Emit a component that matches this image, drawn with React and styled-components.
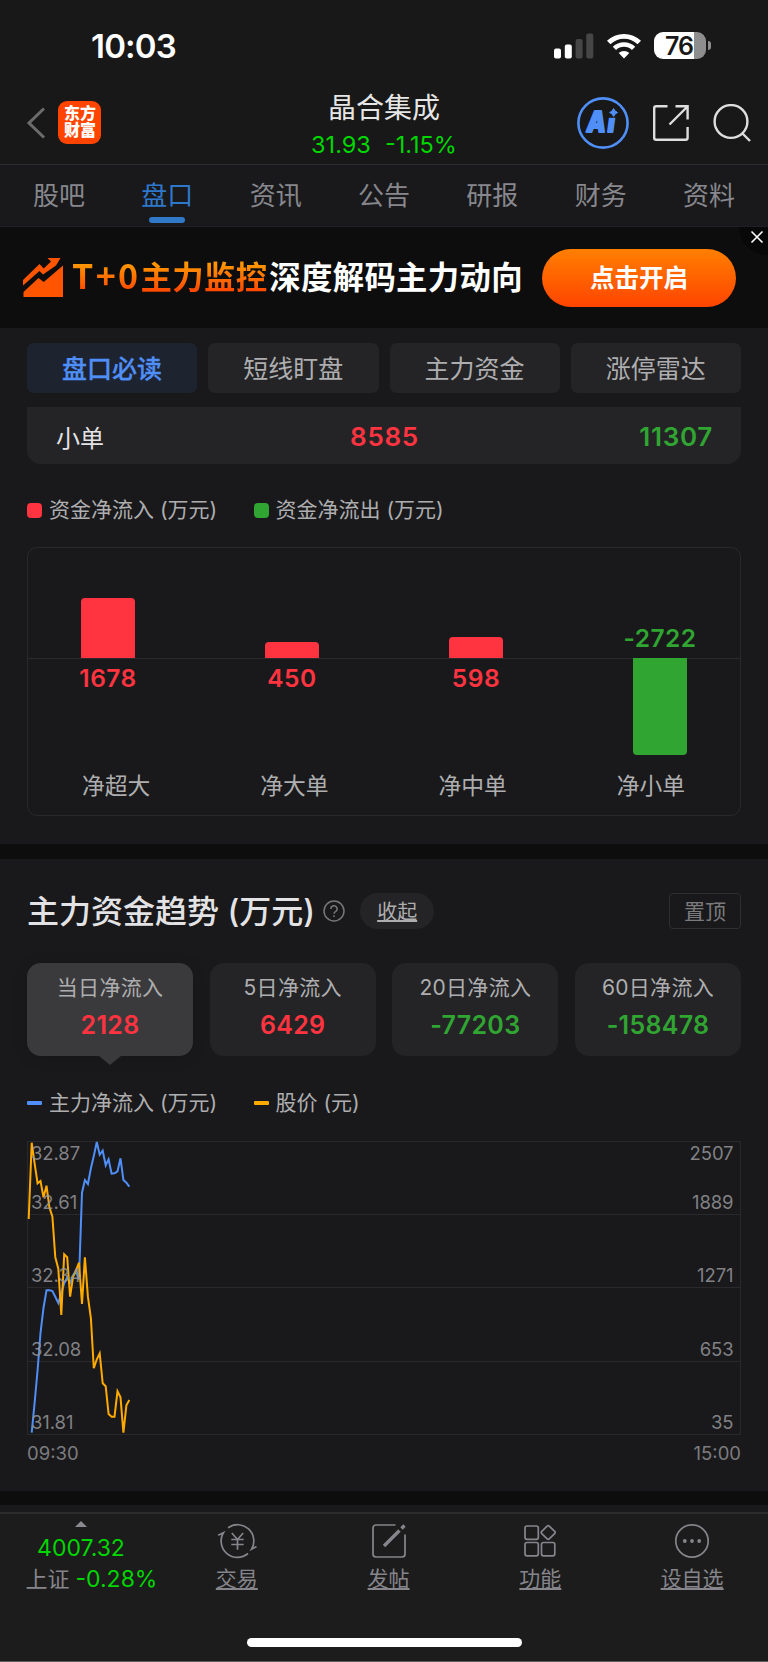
import React from 'react';
import styled, { createGlobalStyle } from 'styled-components';

const GlobalStyle = createGlobalStyle`
  * {
    box-sizing: border-box;
  }
  body {
    margin: 0;
    background: #19191b;
    color: #e3e3e5;
    font-family: Inter, 'Noto Sans CJK SC', sans-serif;
  }
`;

const RED = '#ff3440';
const GREEN = '#30a532';
const LIME = '#00d600';
const BLUE = '#4f8ff7';
const ORANGE = '#ffaa00';

const Page = styled.div`
  display: flex;
  flex-direction: column;
  width: 768px;
  height: 1662px;
  overflow: hidden;
  background: #19191b;
`;

const StatusBar = styled.div`
  display: flex;
  justify-content: space-between;
  align-items: center;
  height: 82px;
  padding: 9px 57px 0 91px;
  background: #181818;
`;

const Clock = styled.span`
  font-size: 33px;
  font-weight: 600;
  line-height: 40px;
  letter-spacing: -0.8px;
  color: #fff;
`;

const StatusIcons = styled.div`
  display: flex;
  align-items: center;
  gap: 13px;
`;

const BatteryBox = styled.div`
  display: flex;
  align-items: center;
  gap: 2px;
`;

const Battery = styled.div`
  display: flex;
  align-items: center;
  justify-content: center;
  width: 52px;
  height: 27px;
  padding-right: 2px;
  border-radius: 9px;
  background: linear-gradient(90deg, #fff 76%, #8e8e8e 76%);
  color: #181818;
  font-size: 25px;
  font-weight: 600;
  letter-spacing: -1px;
`;

const BatteryTip = styled.div`
  width: 3px;
  height: 9px;
  border-radius: 0 4px 4px 0;
  background: #8e8e8e;
`;

const Header = styled.div`
  display: grid;
  grid-template-columns: 1fr auto 1fr;
  align-items: center;
  height: 83px;
  padding: 0 17px 0 26px;
  border-bottom: 1px solid #2c2c2d;
  background: #181818;
`;

const HeaderLeft = styled.div`
  display: flex;
  align-items: center;
  gap: 12px;
  margin-top: -1px;
`;

const Logo = styled.div`
  width: 43px;
  height: 43px;
  padding: 4px 0 0 6px;
  border-radius: 9px;
  background: #ff4400;
  color: #fff;
  font-size: 16px;
  font-weight: 900;
  line-height: 17px;
`;

const HeaderTitle = styled.div`
  display: flex;
  flex-direction: column;
  align-items: center;
  /* keeps the name on the centre of the screen */
  margin-left: -9px;
  padding-top: 8px;
`;

const StockName = styled.div`
  font-size: 28px;
  line-height: 36px;
  color: #e6e6e6;
`;

const StockQuote = styled.div`
  display: flex;
  gap: 14px;
  font-size: 23.5px;
  line-height: 38px;
  color: ${LIME};
`;

const HeaderActions = styled.div`
  display: flex;
  justify-content: flex-end;
  align-items: center;
  gap: 23px;
  margin-top: -1px;
`;

const Tabs = styled.div`
  display: flex;
  justify-content: space-between;
  height: 62px;
  padding: 0 33px;
  border-bottom: 1px solid #202022;
`;

const Tab = styled.div`
  display: flex;
  flex-direction: column;
  align-items: center;
  width: 52px;
  padding-top: 12px;
  font-size: 26px;
  line-height: 38px;
  white-space: nowrap;
  color: ${(p) => (p.$active ? '#2e78cc' : '#87878d')};

  &::after {
    content: '';
    width: 36px;
    height: 6px;
    margin-top: 2px;
    border-radius: 3px;
    background: ${(p) => (p.$active ? '#3078c8' : 'transparent')};
  }
`;

const Banner = styled.div`
  position: relative;
  display: flex;
  align-items: center;
  height: 101px;
  padding: 0 32px 0 22px;
  background: #0d0d0d;
`;

const BannerText = styled.div`
  flex: 1;
  display: flex;
  margin-left: 8px;
  font-size: 31.4px;
  font-weight: 700;
  line-height: 44px;
  letter-spacing: 0.3px;
  white-space: nowrap;
  color: #fff;
`;

const BannerAccent = styled.span`
  margin-right: 2px;
  background: linear-gradient(180deg, #ff9500 20%, #ff4800 80%);
  -webkit-background-clip: text;
  background-clip: text;
  color: transparent;
`;

const BannerLatin = styled.span`
  font-family: 'Noto Sans CJK SC', sans-serif;
  font-size: 34px;
  line-height: 1;
  letter-spacing: 2.4px;
`;

const BannerButton = styled.button`
  width: 194px;
  height: 58px;
  padding: 0 0 3px;
  border: 0;
  border-radius: 29px;
  background: linear-gradient(180deg, #ff7f00, #ff4400);
  color: #fff;
  font-family: 'Noto Sans CJK SC', sans-serif;
  font-size: 24.5px;
  font-weight: 700;
`;

const BannerClose = styled.div`
  position: absolute;
  top: 0;
  right: 0;
  display: flex;
  justify-content: center;
  width: 29px;
  height: 28px;
  padding: 3px 0 0 6px;
  border-bottom-left-radius: 28px;
  background: #080808;
`;

const SubTabs = styled.div`
  display: flex;
  gap: 11px;
  padding: 15px 27px 14px;
`;

const SubTab = styled.div`
  flex: 1;
  height: 50px;
  border-radius: 7px;
  background: ${(p) => (p.$active ? '#1d232f' : '#242426')};
  color: ${(p) => (p.$active ? BLUE : '#aeaeb0')};
  font-size: 25px;
  font-weight: ${(p) => (p.$active ? 500 : 400)};
  -webkit-text-stroke: ${(p) => (p.$active ? '0.3px' : '0')};
  line-height: 52px;
  text-align: center;
`;

const OrderRow = styled.div`
  display: grid;
  grid-template-columns: 1fr 1fr 1fr;
  align-items: center;
  height: 57px;
  margin: 0 27px;
  padding: 2px 28px 0 29px;
  border-radius: 0 0 14px 14px;
  background: #242426;
  font-size: 24px;
`;

const OrderValue = styled.span`
  font-size: 26px;
  font-weight: 600;
  letter-spacing: 0.7px;
  text-align: ${(p) => p.$align};
  color: ${(p) => p.$color};
`;

const Legend = styled.div`
  display: flex;
  align-items: center;
  height: 30px;
  margin: ${(p) => p.$margin};
`;

const LegendItem = styled.div`
  display: flex;
  align-items: center;
  gap: 7px;
  width: 226.5px;
  font-size: 21px;
  line-height: 26px;
  white-space: pre;
  color: #aeaeb0;

  &::before {
    content: '';
    width: 15px;
    height: ${(p) => (p.$line ? 4 : 15)}px;
    border-radius: ${(p) => (p.$line ? 1 : 4)}px;
    background: ${(p) => p.$color};
  }
`;

const FlowBox = styled.div`
  height: 269px;
  margin: 0 27px;
  border: 1px solid #29292b;
  border-radius: 10px;
`;

const FlowRow = styled.div`
  display: flex;
  justify-content: space-between;
  align-items: ${(p) => (p.$upper ? 'flex-end' : 'flex-start')};
  height: ${(p) => (p.$upper ? 111 : 106)}px;
  padding: 0 53px;
  border-bottom: ${(p) => (p.$upper ? '1px solid #2a2a2c' : '0')};
`;

const FlowCell = styled.div`
  display: flex;
  justify-content: center;
  width: 54px;
`;

const Bar = styled.div`
  width: 54px;
  margin-top: ${(p) => (p.$down ? -1 : 0)}px;
  border-radius: ${(p) => (p.$down ? '0 0 4px 4px' : '4px 4px 0 0')};
  background: ${(p) => (p.$down ? GREEN : RED)};
`;

const BarValue = styled.span`
  padding: ${(p) => (p.$down ? '0 0 3px' : '2px 0 0')};
  font-size: 24.5px;
  font-weight: 600;
  line-height: 34px;
  letter-spacing: 0.5px;
  color: ${(p) => (p.$down ? GREEN : RED)};
`;

const FlowNames = styled.div`
  display: grid;
  grid-template-columns: repeat(4, 1fr);
  margin-left: -1px;
  font-size: 22.8px;
  line-height: 42px;
  text-align: center;
  color: #aeaeb0;
`;

const Gap = styled.div`
  height: ${(p) => p.$height}px;
  margin-top: ${(p) => p.$top || 0}px;
  background: #0d0d0d;
`;

const SectionHead = styled.div`
  display: flex;
  align-items: center;
  height: 36px;
  margin: 34px 27px;
`;

const SectionTitle = styled.h2`
  margin: 0 8px 0 0;
  padding-top: 1px;
  font-size: 32px;
  font-weight: 500;
  line-height: 38px;
  white-space: pre;
  color: #e3e3e5;
`;

const Pill = styled.div`
  width: 74px;
  height: 36px;
  margin-left: 15px;
  border-radius: 18px;
  background: #242426;
  color: #aeaeb0;
  font-size: 20px;
  line-height: 38px;
  text-align: center;
  text-decoration: underline;
`;

const PinButton = styled.div`
  width: 72px;
  height: 36px;
  margin-left: auto;
  border: 1px solid #2f2f31;
  border-radius: 4px;
  color: #7b7b7e;
  font-size: 21px;
  line-height: 35px;
  text-align: center;
`;

const Cards = styled.div`
  display: flex;
  gap: 16.6px;
  margin: 0 27px;
`;

const Card = styled.div`
  position: relative;
  flex: 1;
  height: 93px;
  padding-top: 8px;
  border-radius: 14px;
  background: ${(p) => (p.$active ? '#3a3a3c' : '#242426')};
  box-shadow: ${(p) => (p.$active ? '0 2px 16px rgba(0, 0, 0, 0.12)' : 'none')};
  text-align: center;

  &::after {
    content: '';
    display: ${(p) => (p.$active ? 'block' : 'none')};
    position: absolute;
    top: 100%;
    left: 50%;
    margin-left: -11px;
    border: 11px solid transparent;
    border-top: 9px solid #3a3a3c;
    border-bottom: 0;
  }
`;

const CardLabel = styled.div`
  font-size: 21px;
  line-height: 34px;
  letter-spacing: 0.3px;
  color: #aeaeb0;
`;

const CardValue = styled.div`
  margin-top: 3px;
  font-size: 25px;
  font-weight: 600;
  line-height: 34px;
  letter-spacing: 0.3px;
  color: ${(p) => (p.$value < 0 ? GREEN : RED)};
`;

const TrendBox = styled.div`
  position: relative;
  height: 294px;
  margin: 0 27px;
`;

const Scale = styled.div`
  position: absolute;
  top: -1px;
  bottom: 0;
  ${(p) => p.$side}: ${(p) => (p.$side === 'left' ? 4 : 7.5)}px;
  display: flex;
  flex-direction: column;
  font-size: 18.5px;
  line-height: 24px;
  letter-spacing: -0.1px;
  text-align: ${(p) => p.$side};
  color: rgba(150, 150, 154, 0.85);
`;

const Tick = styled.span`
  display: flex;
  flex-direction: column;
  justify-content: flex-end;
  height: ${(p) => (p.$first ? 25 : 73.5)}px;

  &:nth-child(2) {
    height: 48.5px;
  }
`;

const TimeAxis = styled.div`
  display: flex;
  justify-content: space-between;
  margin: 6px 27px 25px;
  font-size: 18.5px;
  line-height: 25px;
  color: #7c7c80;
`;

const Footer = styled.div`
  flex: 1;
  display: flex;
  flex-direction: column;
  margin-top: 7px;
  border-top: 2px solid #2c2c2e;
  border-bottom: 1px solid #5c5c5c;
  background: #1c1c1c;
`;

const FooterRow = styled.div`
  display: flex;
  height: 124px;
  color: #85858b;
`;

const IndexBox = styled.div`
  display: flex;
  flex-direction: column;
  align-items: center;
  width: 161px;
  padding-top: 7px;
  padding-left: 1px;
  font-size: 23px;
  line-height: 31px;
  color: ${LIME};

  &::before {
    content: '';
    margin-bottom: 6px;
    border: 6px solid transparent;
    border-top: 0;
    border-bottom-color: #8a8a90;
  }
`;

const IndexLine = styled.div`
  display: flex;
  gap: 6px;
  margin-left: 21px;
  white-space: nowrap;
`;

const IndexName = styled.span`
  font-size: 22px;
  color: #85858b;
`;

const NavItem = styled.div`
  display: flex;
  flex-direction: column;
  align-items: center;
  width: 151.8px;
  padding-top: 9px;
  font-size: 21px;
  line-height: 32px;
  text-decoration: underline;
  text-underline-offset: 2px;

  svg {
    margin-bottom: 4px;
  }
`;

const HomeIndicator = styled.div`
  width: 275px;
  height: 9px;
  margin: 0 auto;
  border-radius: 5px;
  background: #fff;
`;

const FLOWS = [
  { name: '净超大', value: 1678 },
  { name: '净大单', value: 450 },
  { name: '净中单', value: 598 },
  { name: '净小单', value: -2722 },
];

const CARDS = [
  { label: '当日净流入', value: 2128 },
  { label: '5日净流入', value: 6429 },
  { label: '20日净流入', value: -77203 },
  { label: '60日净流入', value: -158478 },
];

// one point per minute, as height from the top of the plot
const PRICE = [
  78, 1.7, 22.3, 42.3, 40, 56.3, 44.7, 66.3, 75.7, 116.3, 127.7, 174, 113.3,
  116.3, 155.7, 135.7, 129, 121.7, 163, 116.3, 155.7, 177.3, 227.3, 218.3,
  212.3, 242.3, 245.3, 273, 275.7, 275.7, 250.3, 256.3, 291.7, 264.3, 259,
];
const INFLOW = [
  291.7, 262, 229, 192, 167, 149.3, 149.3, 150, 155.7, 162, 152.3, 142.3,
  136.3, 141.7, 135, 131, 138.3, 51.7, 39, 43, 27.3, 15, 1, 13.7, 9.7, 24.3,
  18.3, 32.7, 32.3, 30.3, 17.3, 39, 41.7, 45.7,
];

const toPoints = (list, start) =>
  list.map((y, i) => `${(1.7 + (i + start) * 2.96).toFixed(1)},${y}`).join(' ');

const barHeight = (value) => (Math.abs(value) * 97) / 2722;

const Signal = () => (
  <svg width="40" height="26" viewBox="0 0 40 26">
    <rect x="0" y="15.5" width="7" height="10" rx="2" fill="#fff" />
    <rect x="10.8" y="11.5" width="7" height="14" rx="2" fill="#fff" />
    <rect x="21.6" y="6" width="7" height="19.5" rx="2" fill="#464646" />
    <rect x="32.3" y="0.5" width="7" height="25" rx="2" fill="#464646" />
  </svg>
);

const Wifi = () => (
  <svg width="34" height="26" viewBox="0 0 34 26" fill="none" stroke="#fff">
    <path d="M1.7 9.6a21.8 21.8 0 0 1 30.6 0" strokeWidth="4.9" />
    <path d="M7.4 15.4a13.8 13.8 0 0 1 19.2 0" strokeWidth="4.7" />
    <path d="M11.7 20.1a7.6 7.6 0 0 1 10.6 0L17 25.4z" fill="#fff" stroke="none" />
  </svg>
);

const BackIcon = () => (
  <svg width="20" height="32" viewBox="0 0 20 32" fill="none">
    <path d="M18 1.5L3 16l15 14.5" stroke="#6c6c6c" strokeWidth="3" />
  </svg>
);

const AiIcon = () => (
  <svg width="52" height="52" viewBox="0 0 52 52">
    <circle cx="26" cy="26" r="24.6" fill="none" stroke={BLUE} strokeWidth="2.6" />
    <text
      transform="translate(9.8 35.3) scale(0.86 1)"
      fill={BLUE}
      stroke={BLUE}
      strokeWidth="1.8"
      strokeLinejoin="round"
      fontFamily="Inter"
      fontSize="28"
      fontWeight="900"
      fontStyle="italic"
      letterSpacing="2"
    >
      Ai
    </text>
    <rect x="30.5" y="9" width="12" height="11.8" fill="#181818" />
    <path
      d="M36.6 11.5q1 3 4 4q-3 1-4 4q-1-3-4-4q3-1 4-4z"
      fill={BLUE}
      stroke={BLUE}
      strokeLinejoin="round"
    />
  </svg>
);

const ShareIcon = () => (
  <svg width="38" height="38" viewBox="0 0 38 38" fill="none" stroke="#dedede" strokeWidth="2.4">
    <path d="M15.5 2.3H4.2a2 2 0 0 0-2 2v29.4a2 2 0 0 0 2 2h29.4a2 2 0 0 0 2-2V23" />
    <path d="M17.5 20.5L35 3M23.5 2.3h12.1v13.2" />
  </svg>
);

const SearchIcon = () => (
  <svg width="38" height="38" viewBox="0 0 38 38" fill="none" stroke="#dedede" strokeWidth="2.4">
    <circle cx="18" cy="17.5" r="16.4" />
    <path d="M29.5 29.5l7.5 7.5" />
  </svg>
);

const TrendIcon = () => (
  <svg width="42" height="40" viewBox="0 0 42 40" fill="#ff5500">
    <path d="M1 22L17.5 6l4.2 4.5L29 3.5 25.5 0H38.5l-4.5 7.5L21 16.5 17.5 13 1 27.5z" />
    <path d="M1.5 34L16.5 20l5.2 4L41 7.500V39H1.5z" />
  </svg>
);

const CloseIcon = () => (
  <svg width="14" height="14" viewBox="0 0 14 14" stroke="#fff" strokeWidth="1.6">
    <path d="M1.5 1.5l11 11M12.5 1.5l-11 11" />
  </svg>
);

const HelpIcon = () => (
  <svg width="22" height="22" viewBox="0 0 22 22" fill="none" stroke="#77777a" strokeWidth="1.5">
    <circle cx="11" cy="11" r="10" />
    <path d="M7.9 8.9a3.1 3.1 0 1 1 4.6 2.7q-1.5.8-1.5 2.2M11 15.3v1.6" />
  </svg>
);

const TradeIcon = () => (
  <svg width="40" height="36" viewBox="0 0 40 36" fill="none" stroke="currentColor" strokeWidth="1.7">
    <path d="M11.1 4.7A16.3 16.3 0 0 1 34.6 26.2l4.9-2.6" />
    <path d="M31 30.5A16.3 16.3 0 0 1 6.4 9.8l-5.2 2.5" />
    <path d="M14.8 10l5.7 6.5 5.7-6.5M20.5 16.5v10.3M14.3 16.5h12.4M14.3 21.5h12.4" />
  </svg>
);

const PostIcon = () => (
  <svg width="36" height="36" viewBox="0 0 36 36" fill="none" stroke="currentColor" strokeWidth="1.7">
    <path d="M24.5 2H5a3 3 0 0 0-3 3v26a3 3 0 0 0 3 3h26a3 3 0 0 0 3-3V11.5" />
    <path d="M13 23l15.5-15.5M30.5 5.5l3-3" strokeWidth="3.4" />
  </svg>
);

const GridIcon = () => (
  <svg width="32" height="36" viewBox="0 0 32 36" fill="none" stroke="currentColor" strokeWidth="1.7">
    <rect x="1" y="3" width="13.3" height="13.3" rx="2" />
    <rect x="1" y="19.5" width="13.3" height="13.3" rx="2" />
    <rect x="17.5" y="19.5" width="13.3" height="13.3" rx="2" />
    <rect x="18.9" y="4.2" width="10.6" height="10.6" rx="1.5" transform="rotate(45 24.2 9.5)" />
  </svg>
);

const MoreIcon = () => (
  <svg width="36" height="36" viewBox="0 0 36 36" fill="none" stroke="currentColor" strokeWidth="1.7">
    <circle cx="18" cy="18" r="16.2" />
    <g fill="currentColor" stroke="none">
      <circle cx="10.8" cy="18" r="1.9" />
      <circle cx="18" cy="18" r="1.9" />
      <circle cx="25.2" cy="18" r="1.9" />
    </g>
  </svg>
);

const NAV = [
  { label: '交易', Icon: TradeIcon },
  { label: '发帖', Icon: PostIcon },
  { label: '功能', Icon: GridIcon },
  { label: '设自选', Icon: MoreIcon },
];

const FlowChart = () => (
  <FlowBox>
    <FlowRow $upper>
      {FLOWS.map(({ name, value }) => (
        <FlowCell key={name}>
          {value > 0 ? (
            <Bar style={{ height: barHeight(value) }} />
          ) : (
            <BarValue $down>{value}</BarValue>
          )}
        </FlowCell>
      ))}
    </FlowRow>
    <FlowRow>
      {FLOWS.map(({ name, value }) => (
        <FlowCell key={name}>
          {value > 0 ? (
            <BarValue>{value}</BarValue>
          ) : (
            <Bar $down style={{ height: barHeight(value) }} />
          )}
        </FlowCell>
      ))}
    </FlowRow>
    <FlowNames>
      {FLOWS.map(({ name }) => (
        <span key={name}>{name}</span>
      ))}
    </FlowNames>
  </FlowBox>
);

const TrendChart = () => (
  <TrendBox>
    <svg width="714" height="294" viewBox="0 0 714 294" fill="none">
      <rect x="0.5" y="0.5" width="713" height="293" stroke="#29292b" />
      <path d="M0 73.5h714M0 146.5h714M0 220.5h714" stroke="#29292b" />
      <polyline points={toPoints(INFLOW, 1)} stroke={BLUE} strokeWidth="2" />
      <polyline points={toPoints(PRICE, 0)} stroke={ORANGE} strokeWidth="2" />
    </svg>
    <Scale $side="left">
      {['32.87', '32.61', '32.34', '32.08', '31.81'].map((t, i) => (
        <Tick key={t} $first={i === 0}>{t}</Tick>
      ))}
    </Scale>
    <Scale $side="right">
      {['2507', '1889', '1271', '653', '35'].map((t, i) => (
        <Tick key={t} $first={i === 0}>{t}</Tick>
      ))}
    </Scale>
  </TrendBox>
);

const App = () => (
  <Page>
    <GlobalStyle />
    <StatusBar>
      <Clock>10:03</Clock>
      <StatusIcons>
        <Signal />
        <Wifi />
        <BatteryBox>
          <Battery>76</Battery>
          <BatteryTip />
        </BatteryBox>
      </StatusIcons>
    </StatusBar>
    <Header>
      <HeaderLeft>
        <BackIcon />
        <Logo>
          东方
          <br />
          财富
        </Logo>
      </HeaderLeft>
      <HeaderTitle>
        <StockName>晶合集成</StockName>
        <StockQuote>
          <span>31.93</span>
          <span>-1.15%</span>
        </StockQuote>
      </HeaderTitle>
      <HeaderActions>
        <AiIcon />
        <ShareIcon />
        <SearchIcon />
      </HeaderActions>
    </Header>
    <Tabs>
      {['股吧', '盘口', '资讯', '公告', '研报', '财务', '资料'].map((t) => (
        <Tab key={t} $active={t === '盘口'}>{t}</Tab>
      ))}
    </Tabs>
    <Banner>
      <TrendIcon />
      <BannerText>
        <BannerAccent>
          <BannerLatin>T+0</BannerLatin>主力监控
        </BannerAccent>
        深度解码主力动向
      </BannerText>
      <BannerButton>点击开启</BannerButton>
      <BannerClose>
        <CloseIcon />
      </BannerClose>
    </Banner>
    <SubTabs>
      {['盘口必读', '短线盯盘', '主力资金', '涨停雷达'].map((t, i) => (
        <SubTab key={t} $active={i === 0}>{t}</SubTab>
      ))}
    </SubTabs>
    <OrderRow>
      <span>小单</span>
      <OrderValue $align="center" $color={RED}>8585</OrderValue>
      <OrderValue $align="right" $color={GREEN}>11307</OrderValue>
    </OrderRow>
    <Legend $margin="31px 27px 22px">
      <LegendItem $color={RED}>资金净流入 (万元)</LegendItem>
      <LegendItem $color={GREEN}>资金净流出 (万元)</LegendItem>
    </Legend>
    <FlowChart />
    <Gap $height={15} $top={28} />
    <SectionHead>
      <SectionTitle>主力资金趋势 (万元)</SectionTitle>
      <HelpIcon />
      <Pill>收起</Pill>
      <PinButton>置顶</PinButton>
    </SectionHead>
    <Cards>
      {CARDS.map(({ label, value }, i) => (
        <Card key={label} $active={i === 0}>
          <CardLabel>{label}</CardLabel>
          <CardValue $value={value}>{value}</CardValue>
        </Card>
      ))}
    </Cards>
    <Legend $margin="32px 27px 23px">
      <LegendItem $line $color={BLUE}>主力净流入 (万元)</LegendItem>
      <LegendItem $line $color={ORANGE}>股价 (元)</LegendItem>
    </Legend>
    <TrendChart />
    <TimeAxis>
      <span>09:30</span>
      <span>15:00</span>
    </TimeAxis>
    <Gap $height={14} />
    <Footer>
      <FooterRow>
        <IndexBox>
          <span>4007.32</span>
          <IndexLine>
            <IndexName>上证</IndexName>
            <span>-0.28%</span>
          </IndexLine>
        </IndexBox>
        {NAV.map(({ label, Icon }) => (
          <NavItem key={label}>
            <Icon />
            <span>{label}</span>
          </NavItem>
        ))}
      </FooterRow>
      <HomeIndicator />
    </Footer>
  </Page>
);

export default App;
